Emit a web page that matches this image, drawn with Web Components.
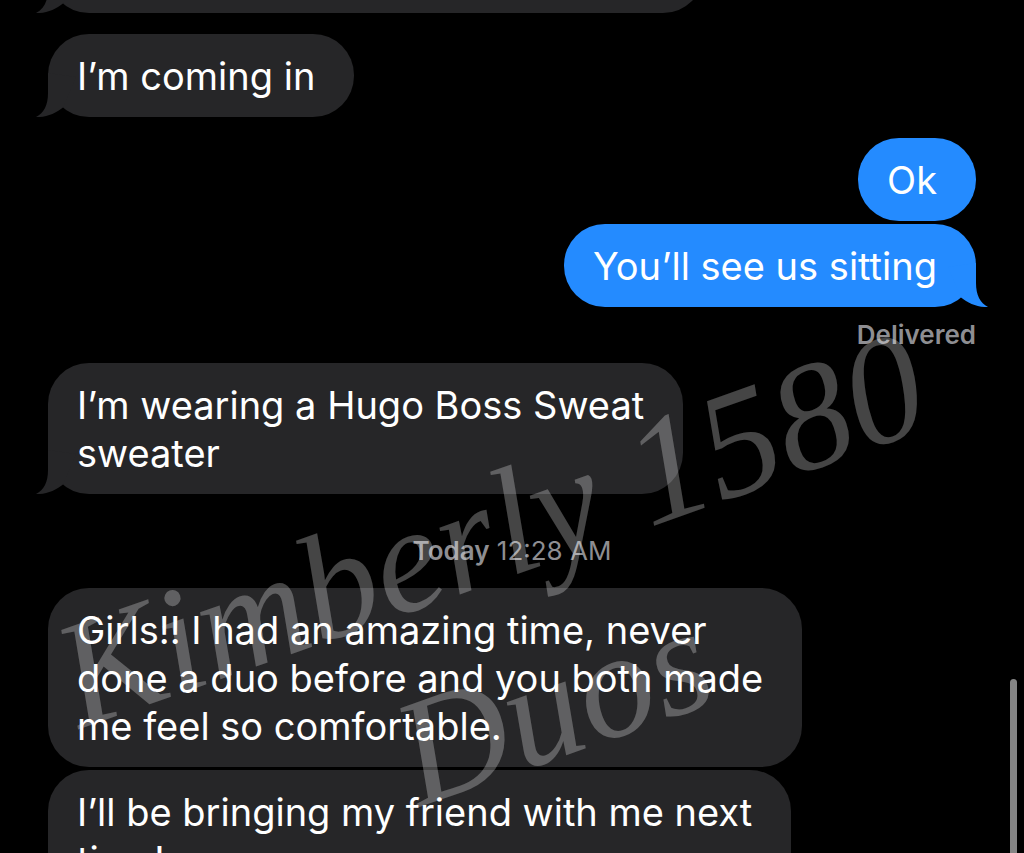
<!DOCTYPE html>
<html lang="en">
<head>
<meta charset="utf-8">
<meta name="viewport" content="width=device-width, initial-scale=1">
<title>Messages</title>
<style>
  html, body { margin: 0; height: 100%; background: #000; overflow: hidden; }
  body { font-family: Inter, "Liberation Sans", sans-serif; color: #fff; }
</style>
</head>
<body>
<chat-thread>
  <chat-bubble class="clipped" side="in" tail>&nbsp;</chat-bubble>
  <chat-bubble side="in" tail class="apart">I’m coming in</chat-bubble>
  <chat-bubble side="out" class="apart">Ok</chat-bubble>
  <chat-bubble side="out" tail>You’ll see us sitting</chat-bubble>
  <chat-note side="out">Delivered</chat-note>
  <chat-bubble side="in" tail>I’m wearing a Hugo Boss Sweat<br>sweater</chat-bubble>
  <chat-note side="center"><b>Today</b> 12:28 AM</chat-note>
  <chat-bubble side="in">Girls!! I had an amazing time, never<br>done a duo before and you both made<br>me feel so comfortable.</chat-bubble>
  <chat-bubble side="in">I’ll be bringing my friend with me next<br>time!</chat-bubble>
  <water-mark slot="overlay">Kimberly 1580<br>Duos</water-mark>
  <scroll-thumb slot="overlay"></scroll-thumb>
</chat-thread>

<script>
const define = (name, html) => customElements.define(name, class extends HTMLElement {
  constructor() {
    super();
    this.attachShadow({ mode: "open" }).innerHTML = html;
  }
});

define("chat-thread", `
  <style>
    :host { display: block; position: relative; height: 100vh; overflow: hidden; background: #000; }
    main { display: flex; flex-direction: column; gap: 3px; padding: 0 48px; }
    ::slotted(.clipped) { margin-top: -70px; width: 656px; }
    ::slotted(.apart) { margin-top: 18px; }
  </style>
  <main><slot></slot></main>
  <slot name="overlay"></slot>`);

define("chat-bubble", `
  <style>
    :host { display: block; position: relative; box-sizing: border-box; flex: none;
            align-self: flex-start; padding: 18px 39px 17px 29px; border-radius: 41px;
            background: var(--fill); --fill: #262628;
            font-size: 38px; line-height: 48px; white-space: nowrap; }
    :host([side="out"]) { align-self: flex-end; --fill: #248bff; }
    svg { display: none; position: absolute; left: -12px; bottom: 0; width: 40px; height: 44px; fill: var(--fill); }
    :host([tail]) svg { display: block; }
    :host([side="out"]) svg { left: auto; right: -12px; transform: scaleX(-1); }
  </style>
  <slot></slot>
  <svg viewBox="0 0 40 44" aria-hidden="true"><path d="M12 0V20C12 32 8 40 0 44C11 44.500 20 40 27 34.500L40 4Z"/></svg>`);

define("chat-note", `
  <style>
    :host { display: block; color: #8e8e92; font-size: 26px; line-height: 32px; }
    :host([side="out"]) { text-align: right; font-weight: 600; padding: 9px 0 9px; }
    :host([side="center"]) { text-align: center; padding: 38px 0 18px; }
    ::slotted(b) { font-weight: 600; }
  </style>
  <slot></slot>`);

define("water-mark", `
  <style>
    :host { position: absolute; left: 20px; right: 0; top: 431px; text-align: center;
            font: italic 152px/187px "Liberation Serif", serif; color: rgba(255,255,255,.27);
            transform: rotate(-19.5deg); pointer-events: none; white-space: nowrap; }
  </style>
  <slot></slot>`);

define("scroll-thumb", `
  <style>
    :host { position: absolute; right: 7px; top: 679px; bottom: -8px; width: 7px;
            border-radius: 4px; background: #858585; }
  </style>`);
</script>
</body>
</html>
